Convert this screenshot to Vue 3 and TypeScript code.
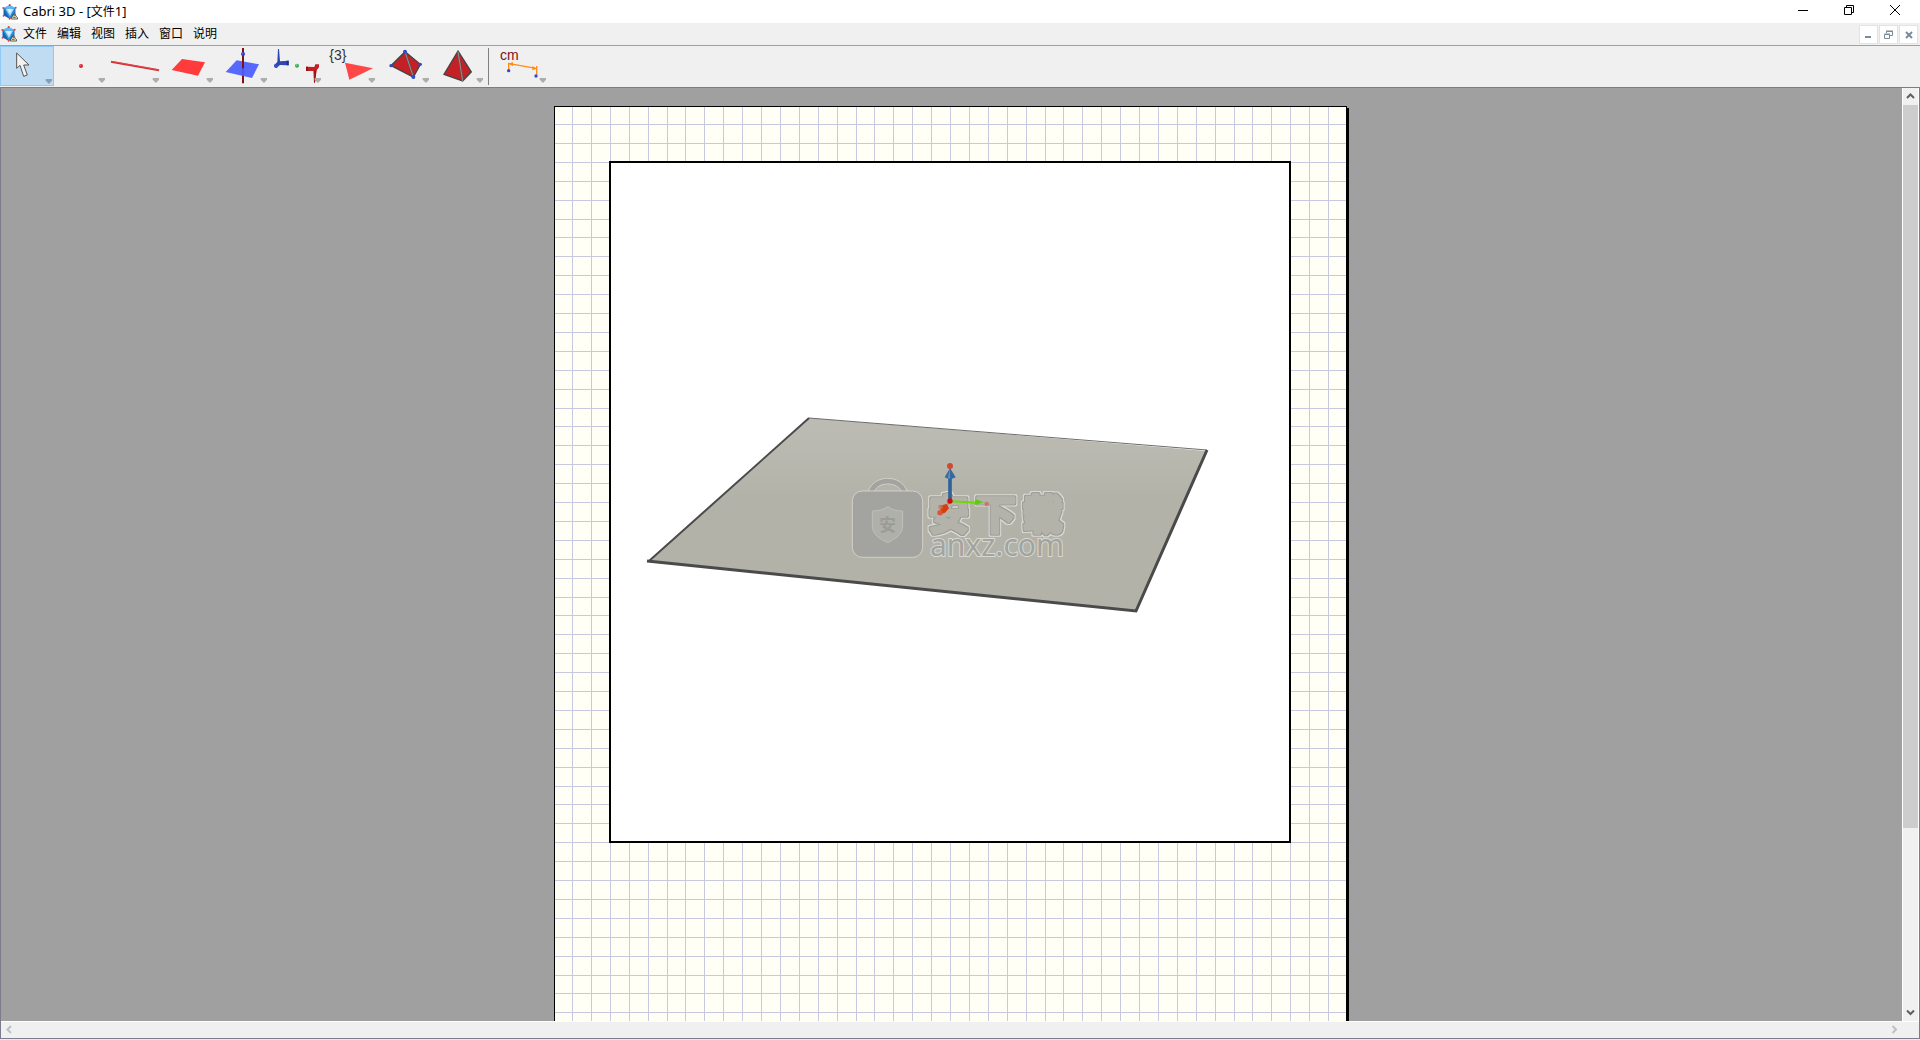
<script setup lang="ts">
const menus: string[] = ['文件', '编辑', '视图', '插入', '窗口', '说明']

// Half-centimetre grid of the sheet, snapped to whole pixels
const sheetWidth = 791
const sheetHeight = 1121
const cell = 18.898
const steps = (limit: number): number[] => {
  const out: number[] = []
  for (let k = 1; Math.round(cell * k - 1.8) < limit; k++) out.push(Math.round(cell * k - 1.8))
  return out
}
const gridPath: string =
  steps(sheetWidth).map((x) => `M${x + 0.5} 0V${sheetHeight}`).join('') +
  steps(sheetHeight).map((y) => `M0 ${y + 0.5}H${sheetWidth}`).join('')

const tools: { id: string; label: string }[] = [
  { id: 'select', label: '操作' },
  { id: 'point', label: '点' },
  { id: 'line', label: '直线' },
  { id: 'plane', label: '平面' },
  { id: 'perp', label: '垂直' },
  { id: 'symmetry', label: '中心对称' },
  { id: 'polygon', label: '正三角形' },
  { id: 'tetra', label: '四面体' },
  { id: 'solid', label: '正四面体' },
  { id: 'measure', label: '距离' },
]
</script>

<template>
  <div class="app">
    <svg class="defs" width="0" height="0" aria-hidden="true">
      <symbol id="logo" viewBox="0 0 48 48">
        <path d="M23 3L40 12V34L23 44L5 34V12Z" fill="#2f93e0" />
        <path d="M23 3L40 12L23 14L5 12Z" fill="#63b8f0" />
        <path d="M5 12L23 44L5 34Z" fill="#1b62ae" />
        <path d="M40 12V34L23 44Z" fill="#2a7cc8" />
        <path d="M11 14H36L24 36Z" fill="#a9dcfa" />
        <path d="M16 16H31L24 28Z" fill="#dff3ff" />
        <g fill="#d9443c">
          <circle cx="23" cy="3" r="3" /><circle cx="41" cy="11" r="3" /><circle cx="4" cy="12" r="3" />
          <circle cx="5" cy="35" r="3" /><circle cx="23" cy="44" r="3" />
        </g>
        <path d="M28 44L31 37L35 30L40 31L42 37L47 41V45H28Z" fill="#f7f2cf" stroke="#111" stroke-width="2" />
        <path d="M33 40H41M35 35H39" stroke="#111" stroke-width="2" />
      </symbol>
    </svg>

    <header class="titlebar">
      <svg class="logo" width="16" height="16"><use href="#logo" /></svg>
      <h1>Cabri 3D - [<span class="name">文件</span>1]</h1>
      <div class="window-controls">
        <button type="button" aria-label="最小化"><svg width="10" height="10"><path d="M0 5.5H10" /></svg></button>
        <button type="button" aria-label="还原">
          <svg width="10" height="10"><path d="M.5 2.5H7.5V9.5H.5ZM2.5 2.5V.5H9.5V7.5H7.5" /></svg>
        </button>
        <button type="button" aria-label="关闭"><svg width="10" height="10"><path d="M0 0L10 10M10 0L0 10" /></svg></button>
      </div>
    </header>

    <nav class="menubar">
      <svg class="logo" width="16" height="16"><use href="#logo" /></svg>
      <button v-for="m in menus" :key="m" type="button" class="menu">{{ m }}</button>
      <div class="child-controls">
        <button type="button" aria-label="最小化文档"><svg width="9" height="9"><path d="M1 7H7" /></svg></button>
        <button type="button" aria-label="还原文档">
          <svg width="9" height="9" class="thin"><path d="M.5 4.5H5.5V8.5H.5ZM.5 4H6M2.5 3V1.5H8.5V5.5H6M2 1H9" /></svg>
        </button>
        <button type="button" aria-label="关闭文档"><svg width="9" height="9"><path d="M2 2L8 8M8 2L2 8" /></svg></button>
      </div>
    </nav>

    <div class="toolbar" role="toolbar">
      <template v-for="t in tools" :key="t.id">
        <span v-if="t.id === 'measure'" class="separator"></span>
        <button type="button" class="tool" :class="{ active: t.id === 'select' }" :aria-label="t.label">
          <svg width="54" height="41" viewBox="0 0 162 123">
            <g v-if="t.id === 'select'">
              <path d="M50 21V67L60 58L71 91L82 87L71 57H87Z" fill="#f2f2f2" stroke="#555" stroke-width="3" />
            </g>
            <g v-else-if="t.id === 'point'">
              <circle cx="81" cy="60" r="6" fill="#d8262b" /><circle cx="79" cy="58" r="2" fill="#f58080" />
            </g>
            <g v-else-if="t.id === 'line'">
              <path d="M9 47L153 73" stroke="#cf2a2e" stroke-width="6" />
              <path d="M9 46L153 72" stroke="#e9585b" stroke-width="2" />
            </g>
            <path v-else-if="t.id === 'plane'" d="M60 39L129 49L108 89L29 72Z" fill="#ff3b3b" />
            <g v-else-if="t.id === 'perp'">
              <path d="M81 60V112" stroke="#7d1218" stroke-width="6" />
              <path d="M62 43L129 55L108 96L29 78Z" fill="#4a5cff" fill-opacity=".92" />
              <path d="M81 6V67" stroke="#7d1218" stroke-width="6" />
              <circle cx="81" cy="24" r="6" fill="#2b3fc0" /><circle cx="79" cy="22" r="2" fill="#7f90ee" />
            </g>
            <g v-else-if="t.id === 'symmetry'">
              <path d="M24 9H27L30 46L56 44V58L30 57L19 66L12 58L22 48Z" fill="#2d46b0" />
              <path d="M50 44H56V58H50Z" fill="#1f3187" /><circle cx="18" cy="60" r="6" fill="#3450c4" />
              <circle cx="81" cy="59" r="6" fill="#2fae4c" /><circle cx="80" cy="57" r="2" fill="#a1e8ad" />
              <path d="M108 62L133 63L136 55H147V64L140 73L135 110H132L130 75L108 75Z" fill="#c41f26" />
              <path d="M108 62H114V75H108ZM133 74L139 73L135 110H133Z" fill="#8d151b" />
            </g>
            <g v-else-if="t.id === 'polygon'">
              <text x="16" y="42" font-size="42" fill="#333">{3}</text>
              <path d="M63 50L147 67L76 101Z" fill="#ff4747" />
            </g>
            <g v-else-if="t.id === 'tetra'">
              <path d="M81 17L39 59L106 93L127 55Z" fill="#c42026" stroke="#444" stroke-width="4" />
              <path d="M81 17L106 93" stroke="#555" stroke-width="6" /><path d="M81 17L106 93" stroke="#b9a9a9" stroke-width="2" />
              <g fill="#2f4ad0">
                <circle cx="81" cy="17" r="6" /><circle cx="39" cy="59" r="5" /><circle cx="127" cy="55" r="5" />
                <circle cx="106" cy="93" r="6" />
              </g>
            </g>
            <g v-else-if="t.id === 'solid'">
              <path d="M78 15L36 85L92 105L118 78Z" fill="#c42026" stroke="#444" stroke-width="4" />
              <path d="M78 17L92 105" stroke="#555" stroke-width="6" /><path d="M78 17L92 105" stroke="#b9a9a9" stroke-width="2" />
            </g>
            <g v-else>
              <text x="15" y="41" font-size="42" fill="#7d1218">cm</text>
              <path d="M41 50V72M125 60V86M43 53L123 67" stroke="#ff8c1a" stroke-width="4" fill="none" />
              <path d="M41 53L54 48V61ZM125 68L112 60V73Z" fill="#ff8c1a" />
              <circle cx="41" cy="74" r="5" fill="#2f4ad0" /><circle cx="123" cy="90" r="5" fill="#2f4ad0" />
            </g>
            <path :d="t.id === 'select' ? 'M137 99H156V104L147 114L137 104Z' : 'M134 96H153V101L144 111L134 101Z'" :fill="t.id === 'select' ? '#8d9dac' : '#adadad'" />
          </svg>
        </button>
      </template>
    </div>

    <main class="workspace">
      <div class="viewport">
        <article class="sheet">
          <svg class="grid" :width="sheetWidth" :height="sheetHeight" aria-hidden="true"><path :d="gridPath" /></svg>
          <section class="view">
            <svg width="678" height="678" role="img" aria-label="3D 视图">
              <defs>
                <linearGradient id="ground" x1="0" y1="0" x2="0" y2="1">
                  <stop offset="0" stop-color="#bcbcb4" /><stop offset=".25" stop-color="#b7b7ae" />
                  <stop offset=".42" stop-color="#b2b2a8" /><stop offset="1" stop-color="#b2b2a9" />
                </linearGradient>
                <filter id="contour" x="-5%" y="-10%" width="110%" height="120%">
                  <feMorphology in="SourceAlpha" operator="dilate" radius="4" result="near" />
                  <feMorphology in="SourceAlpha" operator="dilate" radius="7" result="far" />
                  <feFlood flood-color="#9c9c98" /><feComposite in2="near" operator="in" result="dark" />
                  <feFlood flood-color="#dadad4" /><feComposite in2="far" operator="in" result="light" />
                  <feMerge>
                    <feMergeNode in="light" /><feMergeNode in="dark" /><feMergeNode in="SourceGraphic" />
                  </feMerge>
                </filter>
              </defs>
              <path d="M198 255L596 288L525 448L38 398Z" fill="url(#ground)" />
              <path class="edge far" d="M198 255L596 287" />
              <path class="edge left" d="M198 255L38 398" />
              <path class="edge front" d="M36 398L525 448L596 287" />
              <svg x="219" y="277" width="260" height="140" viewBox="0 0 780 420">
                <g stroke="#d2d2ca" stroke-width="3">
                  <path d="M114 153C126 128 146 115 173 115S220 128 232 153L217 157C207 140 194 132 173 132S141 140 130 157Z" fill="#a3a39f" />
                  <rect x="67" y="153" width="211" height="199" rx="30" fill="#a3a39f" />
                </g>
                <path d="M173 200C187 210 202 213 218 213V258C218 282 198 296 173 308C147 296 127 282 127 258V213C144 213 159 210 173 200Z" fill="#b0b0aa" stroke="#bfbfb8" stroke-width="3" />
                <text class="cjk" x="148" y="272" font-size="50" fill="#9b9b97">安</text>
                <text class="cjk brand" x="296 437 578" y="268" font-size="120" filter="url(#contour)">安下载</text>
                <text class="latin" x="300" y="347" font-size="90">anxz.com</text>

                <path d="M360 183V112" stroke="#2f6399" stroke-width="11" />
                <path d="M360 84L344 112Q360 121 377 112Z" fill="#35699f" /><path d="M360 84L353 114L360 116Z" fill="#5b8fc2" />
                <circle cx="360" cy="78" r="9" fill="#cf4a35" />
                <path d="M365 184L440 188" stroke="#6fd800" stroke-width="6" />
                <path d="M436 177L461 187L433 196Z" fill="#5fca10" />
                <circle cx="470" cy="192" r="7" fill="#c9796c" />
                <path d="M358 188L344 200" stroke="#b98a78" stroke-width="5" />
                <path d="M330 197L350 192L357 205L345 218L333 222Z" fill="#d63c0c" />
                <circle cx="330" cy="218" r="8" fill="#d95535" /><circle cx="332" cy="201" r="7" fill="#c57b62" fill-opacity=".7" />
                <circle cx="360" cy="183" r="8" fill="#d20a12" />
              </svg>
            </svg>
          </section>
        </article>
      </div>
      <div class="vbar">
        <button type="button" aria-label="向上滚动"><svg width="9" height="9"><path d="M1 6L4.500 2.500L8 6" /></svg></button>
        <div class="thumb"></div>
        <div class="rest"></div>
        <button type="button" aria-label="向下滚动"><svg width="9" height="9"><path d="M1 2.500L4.500 6L8 2.500" /></svg></button>
      </div>
    </main>
    <div class="hbar">
      <button type="button" disabled aria-label="向左滚动"><svg width="9" height="9"><path d="M6 1L2.500 4.500L6 8" /></svg></button>
      <button type="button" disabled aria-label="向右滚动"><svg width="9" height="9"><path d="M2.500 1L6 4.500L2.500 8" /></svg></button>
    </div>
  </div>
</template>

<style>
body {
  background: #e8ebf0;
}
</style>

<style scoped>
.app {
  display: flex;
  flex-direction: column;
  height: 100vh;
  padding-bottom: 1px;
  box-sizing: border-box;
  overflow: hidden;
  font: 12px/16px "Noto Sans", "Noto Sans CJK SC", sans-serif;
  color: #000;
}
.defs {
  position: absolute;
}
button {
  display: flex;
  align-items: center;
  justify-content: center;
  margin: 0;
  padding: 0;
  border: 0;
  background: none;
  font: inherit;
  color: inherit;
}
svg {
  display: block;
}
.titlebar {
  flex: none;
  display: flex;
  align-items: center;
  height: 23px;
  padding: 0 2px;
  background: #fff;
}
.logo {
  flex: none;
}
h1 {
  margin: 0 0 0 5px;
  font-size: 13px;
  font-weight: 400;
}
.name {
  font-size: 12px;
}
.window-controls {
  display: flex;
  align-self: stretch;
  margin-left: auto;
  padding-bottom: 3px;
}
.window-controls button {
  width: 46px;
}
.window-controls path {
  fill: none;
  stroke: #000;
}
.menubar {
  flex: none;
  display: flex;
  align-items: center;
  height: 22px;
  padding-left: 1px;
  border-bottom: 1px solid #a0a0a0;
  background: #f0f0f0;
}
.menubar .logo {
  margin-right: 1px;
}
.menu {
  padding: 0 5px;
}
.child-controls {
  display: flex;
  align-self: stretch;
  gap: 1px;
  margin-left: auto;
  padding: 2px 2px 1px 0;
}
.child-controls button {
  width: 19px;
  border: 1px solid #e3e3e3;
  box-sizing: border-box;
  background: #fff;
}
.child-controls path {
  fill: none;
  stroke: #7a8a99;
  stroke-width: 2;
}
.child-controls .thin path {
  stroke-width: 1;
}
.toolbar {
  flex: none;
  display: flex;
  height: 41px;
  background: #f0f0f0;
}
.tool {
  width: 54px;
  height: 41px;
}
.tool.active {
  align-items: flex-start;
  height: 40px;
  background: #c0dcf3;
  box-shadow: inset 0 0 0 1px #90c8f6;
}
.tool text {
  font-family: "Liberation Sans", Arial, sans-serif;
}
.separator {
  width: 1px;
  height: 37px;
  margin: 2px 6px 0 2px;
  background: #808080;
}
.workspace {
  flex: 1;
  display: flex;
  min-height: 0;
  border: solid #7a7c8c;
  border-width: 1px 1px 0;
  background: #a0a0a0;
}
.viewport {
  flex: 1;
  overflow: hidden;
  padding: 18px 2px 0 0;
}
.sheet {
  display: grid;
  width: 791px;
  margin: 0 auto;
  border: 1px solid #000;
  background: #fffff5;
  box-shadow: 1px 2px 0 #000, 2px 2px 0 #000;
}
.grid {
  grid-area: 1 / 1;
}
.grid path {
  stroke: #c8c8e1;
}
.view {
  grid-area: 1 / 1;
  align-self: start;
  justify-self: start;
  margin: 54px;
  border: 2px solid #000;
  background: #fff;
}
.edge {
  fill: none;
  stroke: #4a4a4a;
}
.edge.far {
  stroke: #6c6c6c;
  stroke-width: 1;
}
.edge.left {
  stroke-width: 2;
}
.edge.front {
  stroke-width: 3;
}
.cjk {
  font-family: "Noto Sans CJK SC", sans-serif;
  font-weight: 700;
}
.brand {
  fill: #b3b3aa;
  stroke: #b3b3aa;
  stroke-width: 10;
  stroke-linejoin: round;
}
.latin {
  font-family: "Noto Sans", sans-serif;
  fill: #a3a39f;
  stroke: #d8d8d1;
  stroke-width: 6;
  paint-order: stroke;
}
.vbar {
  flex: none;
  display: flex;
  flex-direction: column;
  width: 15px;
  border: solid #fff;
  border-width: 0 1px;
  background: #f0f0f0;
}
.vbar button {
  flex: none;
  height: 17px;
}
.vbar path {
  fill: none;
  stroke: #606060;
  stroke-width: 2;
}
.thumb {
  flex: 723;
  background: #cdcdcd;
}
.rest {
  flex: 176;
}
.hbar {
  flex: none;
  display: flex;
  justify-content: space-between;
  height: 17px;
  padding-right: 16px;
  border: solid #7a7c8c;
  border-width: 0 1px 1px;
  background: #f0f0f0;
  box-shadow: inset 0 1px 0 #fff;
}
.hbar button {
  width: 17px;
}
.hbar path {
  fill: none;
  stroke: #bfbfbf;
  stroke-width: 2;
}
</style>
